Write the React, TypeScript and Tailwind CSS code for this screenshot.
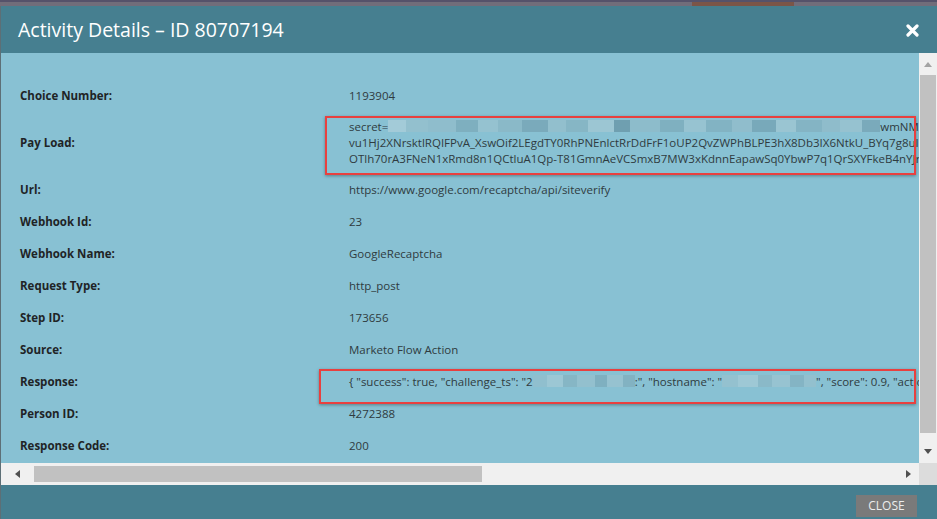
import React from 'react'

const font = { fontFamily: '"Open Sans", "Noto Sans", sans-serif' }

type Blk = [number, string]

const payloadBlur: Blk[] = [
  [18, '#a3cbd8'], [22, '#93c0ce'], [28, '#8fbdcc'], [22, '#7eafbf'], [20, '#95c2d0'], [24, '#8ab9c8'],
  [26, '#7aaabb'], [18, '#92bfcd'], [22, '#86b6c5'], [26, '#9cc6d3'], [16, '#6f9fb0'], [30, '#8dbccb'],
  [24, '#7fb0c0'], [22, '#97c3d1'], [26, '#82b3c3'], [20, '#90bdcc'], [24, '#78a9ba'], [20, '#9ac5d2'],
  [26, '#84b4c4'], [18, '#8fbccb'], [22, '#96c2d0'], [18, '#7aaabb'],
]

const respBlur1: Blk[] = [
  [14, '#90bfce'], [16, '#9cc7d4'], [14, '#86b6c5'], [18, '#93c0ce'], [12, '#7fb0c0'], [16, '#96c2d0'], [12, '#82b2c2'],
]
const respBlur2: Blk[] = [
  [16, '#94c1cf'], [20, '#9ec8d5'], [14, '#8ab9c8'], [18, '#97c3d1'], [14, '#84b4c4'], [12, '#93c0ce'],
]

function Blur({ blocks }: { blocks: Blk[] }) {
  return (
    <span className="inline-flex h-[12px] align-[-1px]">
      {blocks.map(([w, c], i) => (
        <span key={i} className="h-full" style={{ width: w, background: c }} />
      ))}
    </span>
  )
}

function Row({ label, children, tall }: { label: string; children: React.ReactNode; tall?: boolean }) {
  return (
    <div className={`flex ${tall ? 'py-[7px]' : 'h-[32px] items-center'}`}>
      <div className={`w-[348px] shrink-0 pl-[19px] font-bold text-[#1f2426] ${tall ? 'self-center' : ''}`}>{label}</div>
      <div className="whitespace-nowrap text-[#2f3b40]">{children}</div>
    </div>
  )
}

export default function App() {
  return (
    <div className="flex h-[519px] w-[937px] flex-col overflow-hidden text-[11.5px] leading-[16px]" style={font}>
      {/* page behind the dialog */}
      <div className="relative h-[6px] shrink-0 bg-[#716d7a]">
        <div className="h-[2px] bg-[#55526a]" />
        <div className="absolute left-[692px] top-[2px] h-[4px] w-[102px] bg-[#7b5548]" />
      </div>

      {/* header */}
      <div className="flex h-[47px] shrink-0 items-center justify-between border-l border-[#5d6f76] bg-[#467f90] pl-[17px] pr-[18px]">
        <h1 className="text-[19.5px] leading-[26px] text-white">Activity Details – ID 80707194</h1>
        <svg width="13" height="13" viewBox="0 0 13 13" className="mt-[1px]">
          <path d="M2 2 L11 11 M11 2 L2 11" stroke="#fff" strokeWidth="3.2" strokeLinecap="round" />
        </svg>
      </div>

      {/* body */}
      <div className="flex h-[410px] shrink-0 border-l border-[#5d6f76]">
        <div className="relative flex-1 overflow-hidden bg-[#88c1d3] pt-[27px]">
          <Row label="Choice Number:">1193904</Row>
          <Row label="Pay Load:" tall>
            <div>
              secret=
              <Blur blocks={payloadBlur} />
              <span>wmNM3</span>
            </div>
            <div>vu1Hj2XNrsktlRQIFPvA_XswOif2LEgdTY0RhPNEnlctRrDdFrF1oUP2QvZWPhBLPE3hX8Db3IX6NtkU_BYq7g8uI</div>
            <div>OTlh70rA3FNeN1xRmd8n1QCtluA1Qp-T81GmnAeVCSmxB7MW3xKdnnEapawSq0YbwP7q1QrSXYFkeB4nYJr</div>
          </Row>
          <Row label="Url:">https://www.google.com/recaptcha/api/siteverify</Row>
          <Row label="Webhook Id:">23</Row>
          <Row label="Webhook Name:">GoogleRecaptcha</Row>
          <Row label="Request Type:">http_post</Row>
          <Row label="Step ID:">173656</Row>
          <Row label="Source:">Marketo Flow Action</Row>
          <Row label="Response:">
            {'{ "success": true, "challenge_ts": "2'}
            <Blur blocks={respBlur1} />
            {':", "hostname": "'}
            <Blur blocks={respBlur2} />
            {'", "score": 0.9, "action": "submit" }'}
          </Row>
          <Row label="Person ID:">4272388</Row>
          <Row label="Response Code:">200</Row>

          {/* annotation boxes */}
          <div className="absolute left-[324px] top-[63px] h-[59px] w-[591px] border-2 border-[#e8403f] shadow-[0_1px_3px_rgba(0,0,0,0.35)]" />
          <div className="absolute left-[318px] top-[316px] h-[35px] w-[597px] border-2 border-[#e8403f] shadow-[0_1px_3px_rgba(0,0,0,0.35)]" />
        </div>

        {/* vertical scrollbar */}
        <div className="flex w-[18px] shrink-0 flex-col bg-[#f0f0f0]">
          <div className="flex h-[22px] items-center justify-center">
            <svg width="8" height="5" viewBox="0 0 8 5"><path d="M0 5 L4 0 L8 5 Z" fill="#a3a3a3" /></svg>
          </div>
          <div className="mx-[1px] h-[358px] bg-[#c1c1c1]" />
          <div className="flex flex-1 items-end justify-center pb-[9px]">
            <svg width="8" height="5" viewBox="0 0 8 5"><path d="M0 0 L8 0 L4 5 Z" fill="#505050" /></svg>
          </div>
        </div>
      </div>

      {/* horizontal scrollbar */}
      <div className="flex h-[22px] shrink-0 border-l border-[#5d6f76]">
        <div className="flex flex-1 items-center bg-[#f0f0f0]">
          <div className="flex w-[33px] justify-center">
            <svg width="5" height="8" viewBox="0 0 5 8"><path d="M5 0 L5 8 L0 4 Z" fill="#505050" /></svg>
          </div>
          <div className="h-[16px] w-[448px] bg-[#c1c1c1]" />
          <div className="flex flex-1 justify-end pr-[8px]">
            <svg width="5" height="8" viewBox="0 0 5 8"><path d="M0 0 L5 4 L0 8 Z" fill="#505050" /></svg>
          </div>
        </div>
        <div className="w-[18px] bg-[#dcdcdc]" />
      </div>

      {/* footer */}
      <div className="flex h-[34px] shrink-0 items-start justify-end border-l border-[#5d6f76] bg-[#467f90] pr-[20px] pt-[10px]">
        <button className="h-[22px] w-[61px] bg-[#7a7a7a] text-[12px] text-[#ececec]">CLOSE</button>
      </div>
    </div>
  )
}
